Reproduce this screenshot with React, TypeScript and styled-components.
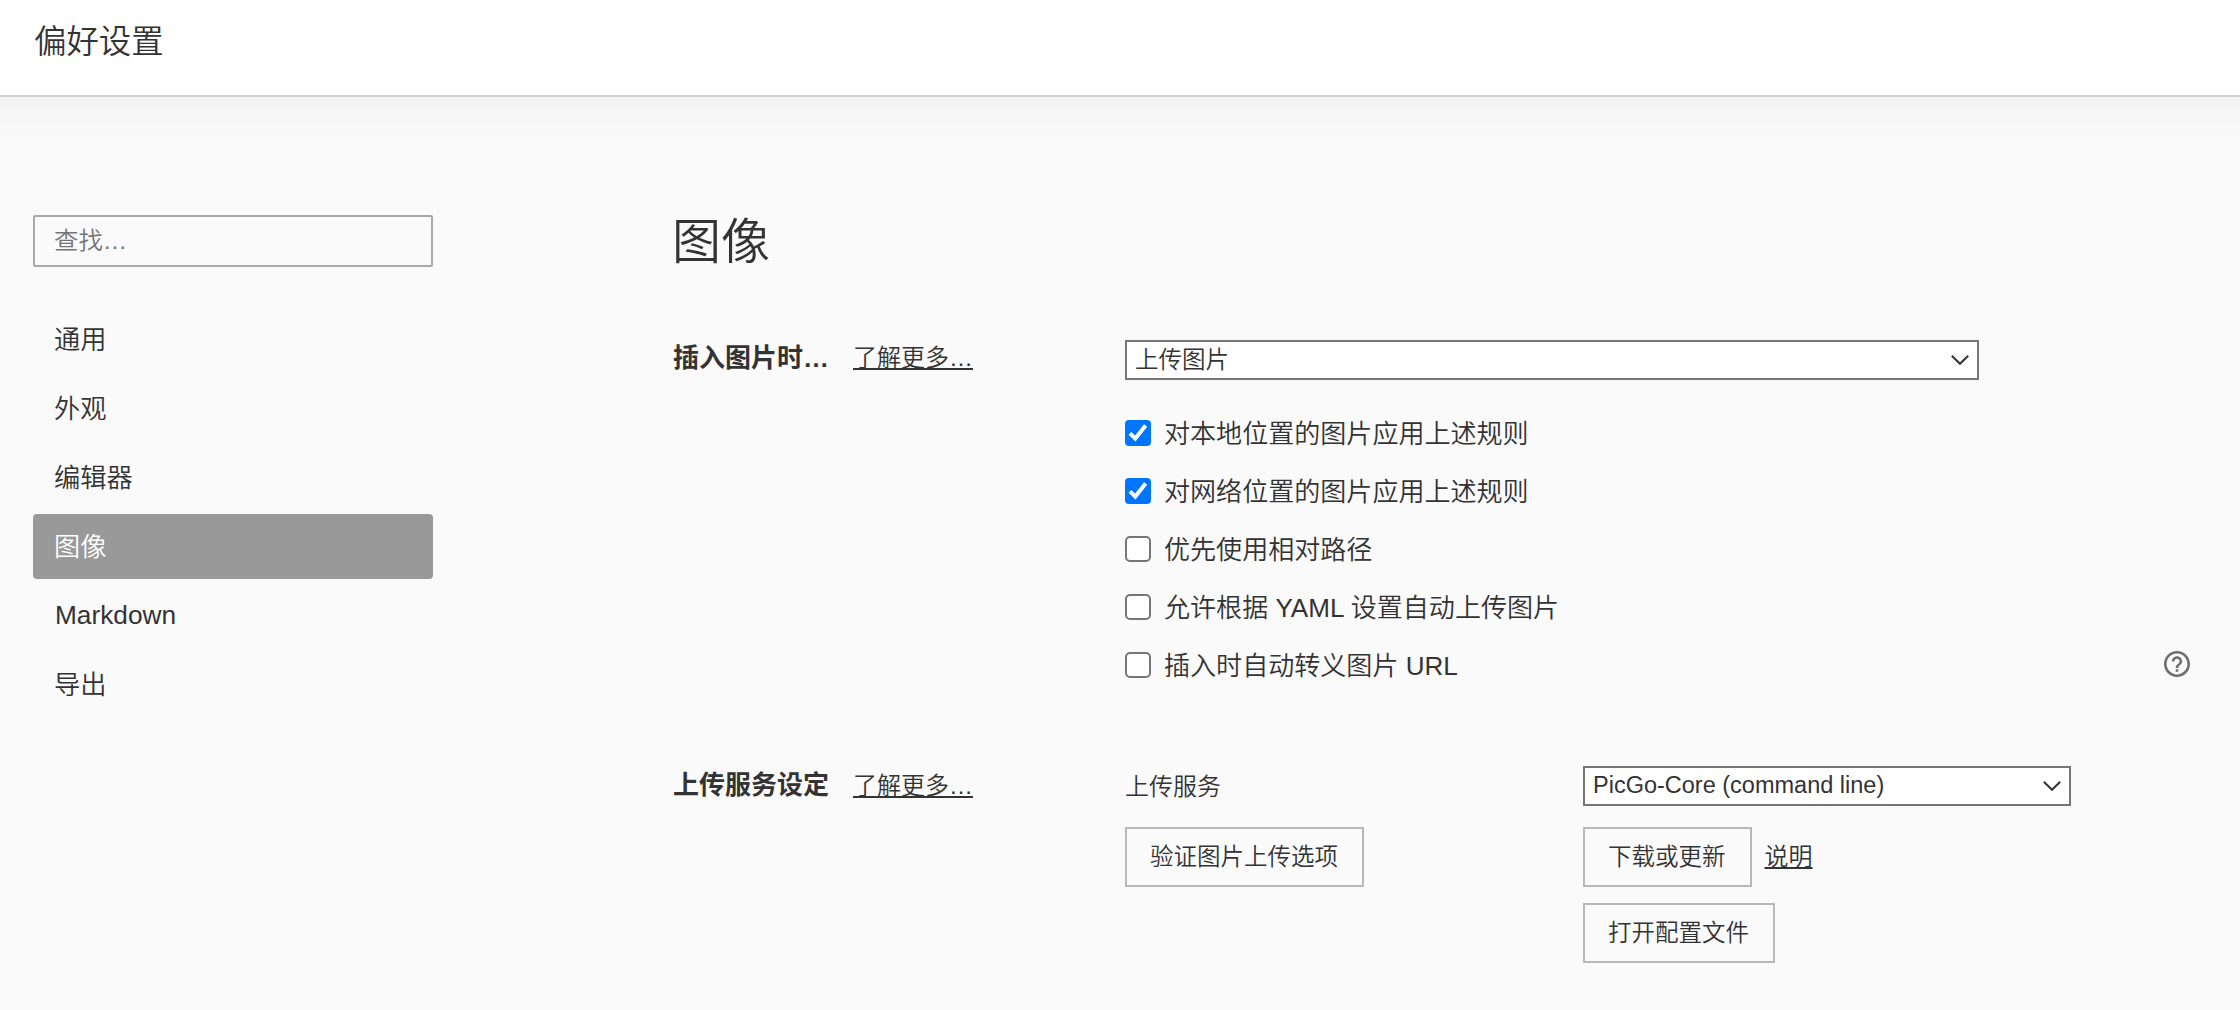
import React from 'react';
import styled, { createGlobalStyle, css } from 'styled-components';

const GlobalStyle = createGlobalStyle`
  * { box-sizing: border-box; }
  body {
    margin: 0;
    background: #fafafa;
    color: #333;
    font-family: "Liberation Sans", "Noto Sans CJK SC", sans-serif;
    font-size: 26.25px;
    font-weight: 350;
    overflow: hidden;
  }
`;

const Page = styled.div`
  min-height: 1010px;
  display: flex;
  flex-direction: column;
`;

const Header = styled.header`
  height: 97px;
  padding: 23px 34px 0;
  background: #fff;
  border-bottom: 2px solid #d0d0d0;
  font-size: 32.4px;
  line-height: 38px;
`;

const Body = styled.div`
  display: flex;
  flex: 1;
  padding: 118px 0 0 33px;
  background: linear-gradient(#f2f2f2, #f6f6f6 14px, #f9f9f9 36px, #fafafa 60px);
`;

const Sidebar = styled.aside`
  width: 400px;
  margin-right: 239px;
`;

const Search = styled.input`
  display: block;
  width: 100%;
  height: 52px;
  padding: 0 20px 0 19px;
  border: 2px solid #a9a9a9;
  border-radius: 2px;
  background: transparent;
  font: inherit;
  font-size: 24.4px;
  outline: none;
  &::placeholder { color: #757575; }
`;

const Nav = styled.nav`
  display: flex;
  flex-direction: column;
  gap: 4px;
  margin-top: 40px;
`;

const NavItem = styled.a<{ $active?: boolean; $latin?: boolean }>`
  height: 65px;
  padding-left: ${(p) => (p.$latin ? 22 : 21)}px;
  border-radius: 4px;
  line-height: ${(p) => (p.$latin ? 64 : 66)}px;
  ${(p) => p.$active && css`background: #999; color: #fff;`}
`;

const Main = styled.main`
  flex: 1;
  padding-right: 50px;
`;

const Heading = styled.h1`
  margin: 0 0 75px;
  height: 50px;
  font-size: 49px;
  font-weight: inherit;
  line-height: 54px;
`;

const Section = styled.section<{ $top?: number }>`
  display: grid;
  grid-template-columns: 453px 1fr;
  margin-top: ${(p) => p.$top ?? 0}px;
`;

const SectionTitle = styled.div<{ $line: number }>`
  display: flex;
  height: 40px;
  padding-left: 1px;
  line-height: ${(p) => p.$line}px;
`;

const Strong = styled.strong`
  width: 180px;
  font-size: 26px;
  font-weight: 700;
`;

const Link = styled.a`
  font-size: 24px;
  text-decoration: underline;
  text-decoration-thickness: 2px;
  text-underline-offset: 2px;
  text-decoration-skip-ink: none;
`;

const Select = styled.div<{ $width: number; $line?: number }>`
  display: flex;
  align-items: flex-start;
  justify-content: space-between;
  width: ${(p) => p.$width}px;
  height: 40px;
  padding: 0 8px;
  border: 2px solid #767676;
  background: #fff;
  font-size: 23.5px;
  line-height: ${(p) => p.$line ?? 36}px;
`;

const Options = styled.div`
  display: flex;
  flex-direction: column;
  gap: 32px;
  margin-top: 40px;
`;

const Option = styled.label`
  display: flex;
  height: 26px;
  font-size: 26.05px;
  line-height: 28px;
`;

const Box = styled.span<{ $checked?: boolean }>`
  display: flex;
  width: 26px;
  height: 26px;
  margin-right: 13px;
  border: 2px solid ${(p) => (p.$checked ? '#0075ff' : '#767676')};
  border-radius: ${(p) => (p.$checked ? 4 : 5)}px;
  background: ${(p) => (p.$checked ? '#0075ff' : '#fff')};
`;

const Help = styled.span`
  display: flex;
  height: 26px;
  margin: -1px 0 0 auto;
`;

const Service = styled.div`
  display: grid;
  grid-template-columns: 458px 1fr;
`;

const Stack = styled.div`
  display: flex;
  flex-direction: column;
  align-items: flex-start;
`;

const FieldLabel = styled.div`
  height: 61px;
  font-size: 24px;
  line-height: 42px;
`;

const Row = styled.div<{ $top?: number }>`
  display: flex;
  gap: 13px;
  margin-top: ${(p) => p.$top ?? 0}px;
  line-height: 60px;
`;

const Button = styled.button`
  height: 60px;
  padding: 1px 24px 0 23px;
  border: 2px solid #b8b8b8;
  background: transparent;
  color: inherit;
  font: inherit;
  font-size: 23.5px;
  line-height: 55px;
`;

const Arrow = styled.svg`
  flex: none;
  margin-top: 12px;
`;

const Chevron = () => (
  <Arrow width="18" height="12" viewBox="0 0 18 12" fill="none" stroke="#333" strokeWidth="2">
    <path d="M0.8 1.8 9 9.8 17.2 1.8" />
  </Arrow>
);

const Check = () => (
  <svg width="22" height="22" viewBox="0 0 22 22" fill="none" stroke="#fff" strokeWidth="4">
    <path d="M3 11.4 8.3 16.6 18.6 3.4" />
  </svg>
);

const HelpIcon = () => (
  <svg width="26" height="26" viewBox="2 2 20 20" fill="#6e6e6e">
    <path d="M11 18h2v-2h-2v2zm1-16C6.48 2 2 6.48 2 12s4.48 10 10 10 10-4.48 10-10S17.52 2 12 2zm0 18c-4.41 0-8-3.59-8-8s3.59-8 8-8 8 3.59 8 8-3.59 8-8 8zm0-14c-2.21 0-4 1.79-4 4h2c0-1.1.9-2 2-2s2 .9 2 2c0 2-3 1.75-3 5h2c0-2.25 3-2.5 3-5 0-2.21-1.79-4-4-4z" />
  </svg>
);

const navItems = ['通用', '外观', '编辑器', '图像', 'Markdown', '导出'];

const options = [
  { label: '对本地位置的图片应用上述规则', checked: true },
  { label: '对网络位置的图片应用上述规则', checked: true },
  { label: '优先使用相对路径' },
  { label: '允许根据 YAML 设置自动上传图片' },
  { label: '插入时自动转义图片 URL', help: true },
];

export default function App() {
  return (
    <Page lang="zh-CN">
      <GlobalStyle />
      <Header>偏好设置</Header>
      <Body>
        <Sidebar>
          <Search placeholder="查找…" />
          <Nav>
            {navItems.map((item) => (
              <NavItem key={item} $active={item === '图像'} $latin={item === 'Markdown'}>{item}</NavItem>
            ))}
          </Nav>
        </Sidebar>
        <Main>
          <Heading>图像</Heading>
          <Section>
            <SectionTitle $line={36}>
              <Strong>插入图片时…</Strong>
              <Link>了解更多…</Link>
            </SectionTitle>
            <div>
              <Select $width={854}>上传图片<Chevron /></Select>
              <Options>
                {options.map((o) => (
                  <Option key={o.label}>
                    <Box $checked={o.checked}>{o.checked && <Check />}</Box>
                    {o.label}
                    {o.help && <Help><HelpIcon /></Help>}
                  </Option>
                ))}
              </Options>
            </div>
          </Section>
          <Section $top={88}>
            <SectionTitle $line={39}>
              <Strong>上传服务设定</Strong>
              <Link>了解更多…</Link>
            </SectionTitle>
            <Service>
              <Stack>
                <FieldLabel>上传服务</FieldLabel>
                <Button>验证图片上传选项</Button>
              </Stack>
              <Stack>
                <Select $width={488} $line={34}>PicGo-Core (command line)<Chevron /></Select>
                <Row $top={21}>
                  <Button>下载或更新</Button>
                  <Link>说明</Link>
                </Row>
                <Row $top={16}>
                  <Button>打开配置文件</Button>
                </Row>
              </Stack>
            </Service>
          </Section>
        </Main>
      </Body>
    </Page>
  );
}
